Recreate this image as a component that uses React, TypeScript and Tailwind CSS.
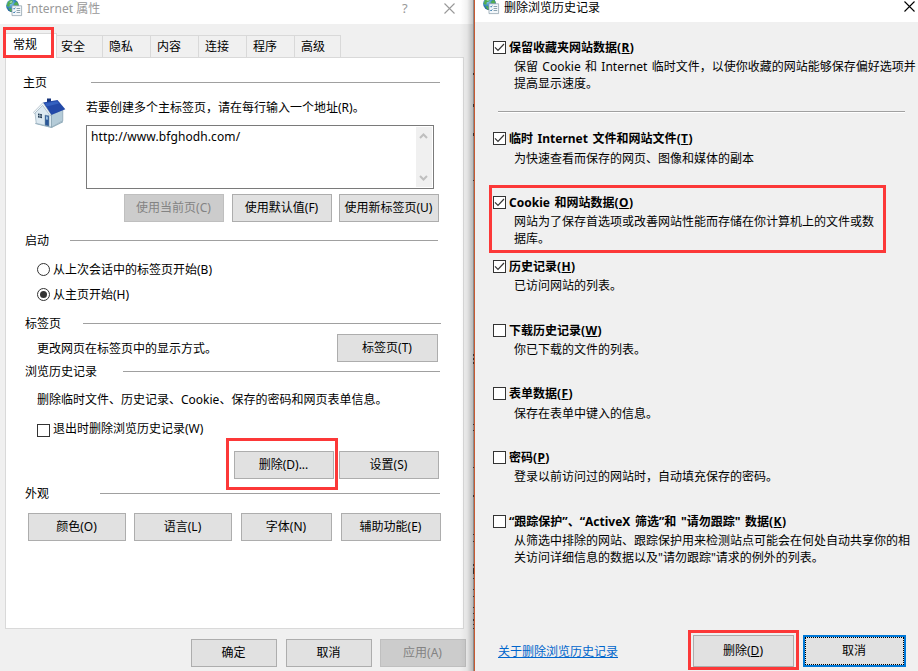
import type { ReactNode } from 'react'
import clsx from 'clsx'

type HistoryOption = {
  label: string
  accessKey: string
  lines: string[]
  checked?: boolean
  highlighted?: boolean
  size: string
  gap?: string
}

const tabs = ['安全', '隐私', '内容', '连接', '程序', '高级']

const historyOptions: HistoryOption[] = [
  {
    label: '临时 Internet 文件和网站文件',
    accessKey: 'T',
    lines: ['为快速查看而保存的网页、图像和媒体的副本'],
    checked: true,
    size: 'h-[64px]',
    gap: 'mt-[3px]',
  },
  {
    label: 'Cookie 和网站数据',
    accessKey: 'O',
    lines: ['网站为了保存首选项或改善网站性能而存储在你计算机上的文件或数', '据库。'],
    checked: true,
    highlighted: true,
    size: 'h-[64px]',
  },
  {
    label: '历史记录',
    accessKey: 'H',
    lines: ['已访问网站的列表。'],
    checked: true,
    size: 'h-[64px]',
  },
  { label: '下载历史记录', accessKey: 'W', lines: ['你已下载的文件的列表。'], size: 'h-[63px]' },
  {
    label: '表单数据',
    accessKey: 'F',
    lines: ['保存在表单中键入的信息。'],
    size: 'h-[64px]',
    gap: 'mt-[3px]',
  },
  {
    label: '密码',
    accessKey: 'P',
    lines: ['登录以前访问过的网站时，自动填充保存的密码。'],
    size: 'h-[64px]',
  },
  {
    label: '“跟踪保护”、“ActiveX 筛选”和 "请勿跟踪" 数据',
    accessKey: 'K',
    lines: [
      '从筛选中排除的网站、跟踪保护用来检测站点可能会在何处自动共享你的相',
      '关访问详细信息的数据以及"请勿跟踪"请求的例外的列表。',
    ],
    size: 'h-[64px]',
  },
]

function InternetIcon() {
  return (
    <svg width="17" height="17" viewBox="0 0 17 17" className="shrink-0">
      <defs>
        <radialGradient id="globe" cx="0.35" cy="0.3" r="0.75">
          <stop offset="0" stopColor="#8fd0ee" />
          <stop offset="0.55" stopColor="#2f7fb8" />
          <stop offset="1" stopColor="#1a4b86" />
        </radialGradient>
      </defs>
      <circle cx="6.5" cy="5.8" r="6.4" fill="url(#globe)" />
      <path d="M2 1.8 5 0 7.2 1.1 6 3.5 3.7 4.3 3.4 6.7.6 5.9zM7.5 4.3l3-2.8L12.6 4.3l-2 2zM2.3 7.7l3 .8.6 2.8-1.4.4z" fill="#52ad4e" />
      <path d="M3.2 2.1 6.4.9 5.2 3z" fill="#b9e6d2" />
      <path d="M6 5.8h9.6v9.8H6z" fill="#f3f7fa" stroke="#93a4b0" strokeWidth=".8" />
      <path d="m7.3 8.4.8.8 1.2-1.6M7.3 12.2l.8.8 1.2-1.6" fill="none" stroke="#2c76ae" strokeWidth=".9" />
      <path d="M10.6 8.5h3.6M10.6 10.5h3.6M10.6 12.5h3.6" stroke="#8097a6" strokeWidth=".9" />
    </svg>
  )
}

function HouseIcon() {
  return (
    <svg width="33" height="30" viewBox="0 0 33 30" className="-mt-px shrink-0">
      <path d="M2 14.5 10.5 6 19 16.5v12.6L3.2 25.3z" fill="#dce9f1" stroke="#8ba3b2" strokeWidth=".6" />
      <path d="m18.5 16.5 11.3-5v11.3l-11.3 6.5z" fill="#b4cbd8" stroke="#7893a4" strokeWidth=".6" />
      <path d="m2 25 16.5 4.3L30 23v1.2L18.5 30 2.5 26z" fill="#8ca9b9" />
      <path d="M14 .5h4v5l-4-1z" fill="#17357c" />
      <path d="M10 4.6 24.5 2 32.3 11.3 18.2 17z" fill="#2349a8" />
      <path d="M12 5.2 24 3.2l2 2.3-12.3 3z" fill="#3461c0" />
      <path d="m.3 14.5 9.7-9.9L18.2 17l-1.2.7L9.7 7.4 1.4 15.6z" fill="#f4f8fa" stroke="#829baa" strokeWidth=".5" />
      <path d="m5 15.6 4 .7v4l-4-.8z" fill="#263d55" />
      <path d="M6.8 15.9v3.9M5 17.4l4 .8" stroke="#c9dae4" strokeWidth=".6" />
      <path d="m12 17 4 .8v10.4l-4-1z" fill="#2b5798" stroke="#7894a7" strokeWidth=".5" />
      <path d="m13 18.3 1.8.4v3l-1.8-.3z" fill="#9fc5e4" />
    </svg>
  )
}

function CloseIcon({ className }: { className?: string }) {
  return (
    <svg width="11" height="11" viewBox="0 0 11 11" className={className}>
      <path d="m.5.5 10 10M10.5.5l-10 10" stroke="currentColor" strokeWidth="1.1" />
    </svg>
  )
}

function Button({
  children,
  className,
  disabled,
}: {
  children: ReactNode
  className: string
  disabled?: boolean
}) {
  return (
    <button
      type="button"
      disabled={disabled}
      className={clsx(
        'flex h-7 shrink-0 items-center justify-center border pr-px pb-px whitespace-nowrap',
        disabled ? 'border-[#bfbfbf] bg-[#cccccc] text-[#838383]' : 'border-[#adadad] bg-[#e1e1e1]',
        className,
      )}
    >
      {children}
    </button>
  )
}

function SectionHeader({
  title,
  className,
  line,
}: {
  title: string
  className: string
  line: string
}) {
  return (
    <div className={clsx('flex h-[17px] shrink-0 items-center justify-between', className)}>
      <h2>{title}</h2>
      <div className={clsx('h-px bg-[#a0a0a0]', line)} />
    </div>
  )
}

function Checkbox({ checked }: { checked?: boolean }) {
  return (
    <span className="flex size-[13px] shrink-0 items-center justify-center border border-[#333] bg-white">
      {checked && (
        <svg width="11" height="11" viewBox="0 0 11 11">
          <path d="m1 5.3 3 3 6-6.3" fill="none" stroke="#333" strokeWidth="1.2" />
        </svg>
      )}
    </span>
  )
}

function Radio({ checked }: { checked?: boolean }) {
  return (
    <span className="flex size-[13px] shrink-0 items-center justify-center rounded-full border border-[#333] bg-white">
      {checked && <span className="size-[7px] rounded-full bg-[#333]" />}
    </span>
  )
}

function Highlight({ className }: { className: string }) {
  return <div className={clsx('pointer-events-none absolute border-3 border-[#fc3838]', className)} />
}

function OptionItem({
  label,
  accessKey,
  lines,
  checked,
  highlighted,
  size,
  gap = 'mt-[2px]',
}: HistoryOption) {
  return (
    <div className={clsx('relative shrink-0', size)}>
      <div className="flex h-[17px] items-center gap-[3px] font-bold whitespace-nowrap [word-spacing:1.5px]">
        <Checkbox checked={checked} />
        <span>
          {label}
          <span className="tracking-[0.4px]">
            (<u>{accessKey}</u>)
          </span>
        </span>
      </div>
      <div className={clsx('pl-[21px] whitespace-nowrap [word-spacing:1.2px]', gap)}>
        {lines.map((line) => (
          <p key={line}>{line}</p>
        ))}
      </div>
      {highlighted && <Highlight className="-top-[9px] -left-[4px] h-[68px] w-[397px]" />}
    </div>
  )
}

function PropertiesDialog() {
  return (
    <section className="relative flex h-full w-[474px] shrink-0 flex-col bg-[#f0f0f0]">
      <header className="flex h-6 shrink-0 items-start bg-white pl-[6px] text-[#999]">
        <InternetIcon />
        <h1 className="ml-1 w-[375px]">Internet 属性</h1>
        <span className="w-[42px] text-[13px]">?</span>
        <CloseIcon className="mt-[3px]" />
      </header>

      <nav className="relative mt-[9px] flex h-6 shrink-0 items-end pl-[5px]">
        <div className="relative z-10 -mb-px h-[25px] w-[52px] border border-b-0 border-[#d9d9d9] bg-white pt-[2px] pl-[7px]">
          常规
        </div>
        {tabs.map((tab, i) => (
          <div
            key={tab}
            className={clsx(
              'h-[22px] border-t border-r border-[#d9d9d9] pt-[2px]',
              i === 0 ? 'w-[46px] pl-1' : i === 5 ? 'w-[46px] pl-[6px]' : 'w-12 pl-[6px]',
            )}
          >
            {tab}
          </div>
        ))}
        <Highlight className="-top-[6px] left-[3px] z-20 h-[31px] w-[51px]" />
      </nav>

      <div className="ml-[5px] flex h-[572px] w-[459px] shrink-0 flex-col border border-[#d9d9d9] bg-white pt-4">
        <SectionHeader title="主页" className="ml-[17px] w-[417px]" line="w-[349px]" />
        <div className="mt-2 ml-[27px] flex shrink-0 gap-5">
          <HouseIcon />
          <div>
            <p>若要创建多个主标签页，请在每行输入一个地址(R)。</p>
            <div className="mt-[9px] flex h-16 w-[348px] justify-between border border-[#7a7a7a] p-px pl-1">
              <span className="pt-px tracking-[0.1px]">http://www.bfghodh.com/</span>
              <div className="flex w-4 flex-col items-center justify-between bg-[#f0f0f0] py-[6px] pr-px text-[#bfbfbf]">
                <svg width="9" height="6" viewBox="0 0 9 6">
                  <path d="m1 5 3.5-3.5L8 5" fill="none" stroke="currentColor" strokeWidth="2" />
                </svg>
                <svg width="9" height="6" viewBox="0 0 9 6">
                  <path d="m1 1 3.5 3.5L8 1" fill="none" stroke="currentColor" strokeWidth="2" />
                </svg>
              </div>
            </div>
          </div>
        </div>
        <div className="mt-[5px] ml-[118px] flex shrink-0">
          <Button className="w-[100px]" disabled>
            使用当前页(C)
          </Button>
          <Button className="ml-2 w-[100px]">使用默认值(F)</Button>
          <Button className="ml-[7px] w-[100px]">使用新标签页(U)</Button>
        </div>

        <SectionHeader title="启动" className="mt-[10px] ml-[19px] w-[413px]" line="w-[368px]" />
        <label className="mt-3 ml-[31px] flex h-[17px] shrink-0 items-center gap-[3px]">
          <Radio />
          从上次会话中的标签页开始(B)
        </label>
        <label className="mt-2 ml-[31px] flex h-[17px] shrink-0 items-center gap-[3px]">
          <Radio checked />
          从主页开始(H)
        </label>

        <SectionHeader title="标签页" className="mt-3 ml-[19px] w-[416px]" line="w-[358px]" />
        <div className="mt-[2px] ml-[31px] flex w-[401px] shrink-0 items-center justify-between">
          <p>更改网页在标签页中的显示方式。</p>
          <Button className="w-[101px]">标签页(T)</Button>
        </div>

        <SectionHeader title="浏览历史记录" className="mt-px ml-[19px] w-[415px]" line="w-[317px]" />
        <p className="mt-[11px] ml-[31px] shrink-0">删除临时文件、历史记录、Cookie、保存的密码和网页表单信息。</p>
        <label className="mt-[12px] mb-px ml-[31px] flex h-[17px] shrink-0 gap-[3px]">
          <span className="pt-1">
            <Checkbox />
          </span>
          退出时删除浏览历史记录(W)
        </label>
        <div className="mt-[13px] ml-[228px] flex shrink-0 gap-[5px]">
          <div className="relative">
            <Button className="w-[100px]">删除(D)...</Button>
            <Highlight className="-top-[13px] -left-2 h-[52px] w-[112px]" />
          </div>
          <Button className="w-[100px]">设置(S)</Button>
        </div>

        <SectionHeader title="外观" className="mt-[6px] ml-[19px] w-[415px]" line="w-[340px]" />
        <div className="mt-[11px] ml-[22px] flex shrink-0">
          <Button className="w-[98px]">颜色(O)</Button>
          <Button className="ml-2 w-[98px]">语言(L)</Button>
          <Button className="ml-[9px] w-[91px]">字体(N)</Button>
          <Button className="ml-[9px] w-[100px]">辅助功能(E)</Button>
        </div>
      </div>

      <footer className="mt-[10px] ml-[191px] flex">
        <Button className="w-[86px]">确定</Button>
        <Button className="ml-[9px] w-[86px]">取消</Button>
        <Button className="ml-2 w-[86px]" disabled>
          应用(A)
        </Button>
      </footer>

      {/* drop shadow cast by the dialog in front */}
      <div className="pointer-events-none absolute inset-y-0 right-0 w-[14px] bg-linear-to-r from-transparent via-black/5 to-black/25" />
      <svg width="1" height="671" className="absolute top-0 right-0">
        <path d="M.5 0V671" stroke="#8c8c8c" strokeWidth="1" />
        <path
          d="M.5 73v2M.5 104v3M.5 133v3M.5 180v1M.5 354v2M.5 358v2M.5 362v2M.5 424v1M.5 430v1M.5 467v1M.5 495v2M.5 534v1M.5 541v1M.5 564v2M.5 568v6M.5 578v1M.5 589v1M.5 596v1M.5 607v1M.5 613v1M.5 619v2M.5 624v1M.5 628v1"
          stroke="#333"
          strokeWidth="1"
        />
      </svg>
    </section>
  )
}

function DeleteHistoryDialog() {
  return (
    <section className="flex h-full w-[444px] shrink-0 flex-col border-l border-[#c85a32] bg-[#f0f0f0]">
      <header className="flex h-[22px] shrink-0 items-start bg-white pl-2">
        <div className="-mt-[2px]">
          <InternetIcon />
        </div>
        <h1 className="ml-1 w-[400px] leading-[15px]">删除浏览历史记录</h1>
        <CloseIcon className="mt-px shrink-0" />
      </header>

      <div className="mt-[17px] flex h-[587px] shrink-0 flex-col pl-[18px]">
        <OptionItem
          label="保留收藏夹网站数据"
          accessKey="R"
          lines={['保留 Cookie 和 Internet 临时文件，以使你收藏的网站能够保存偏好选项并', '提高显示速度。']}
          checked
          size="h-[72px]"
        />
        <div className="mb-[17px] ml-[5px] h-[2px] w-[407px] shrink-0 border-b border-white bg-[#a0a0a0]" />
        {historyOptions.map((option) => (
          <OptionItem key={option.accessKey} {...option} />
        ))}
      </div>

      <footer className="mt-[9px] flex h-8 shrink-0 items-center pl-[23px]">
        <a href="#" className="w-[195px] text-[#0066cc] underline">
          关于删除浏览历史记录
        </a>
        <div className="relative">
          <button
            type="button"
            className="flex h-8 w-[101px] items-center justify-center border border-[#adadad] bg-[#e1e1e1] pr-px pb-px"
          >
            删除(<u>D</u>)
          </button>
          <Highlight className="-top-[5px] -left-[5px] h-10 w-[111px]" />
        </div>
        <button type="button" className="ml-[9px] h-8 w-[103px] border-2 border-[#0078d7] bg-[#e1e1e1]">
          <span className="flex h-full items-center justify-center border border-dotted border-black pr-px pb-px">
            取消
          </span>
        </button>
      </footer>
    </section>
  )
}

export default function App() {
  return (
    <main className="flex h-[671px] w-[918px] overflow-hidden bg-[#f0f0f0] font-['Noto_Sans','Noto_Sans_CJK_SC',sans-serif] text-[12px] leading-[17px] text-black">
      <PropertiesDialog />
      <DeleteHistoryDialog />
    </main>
  )
}
